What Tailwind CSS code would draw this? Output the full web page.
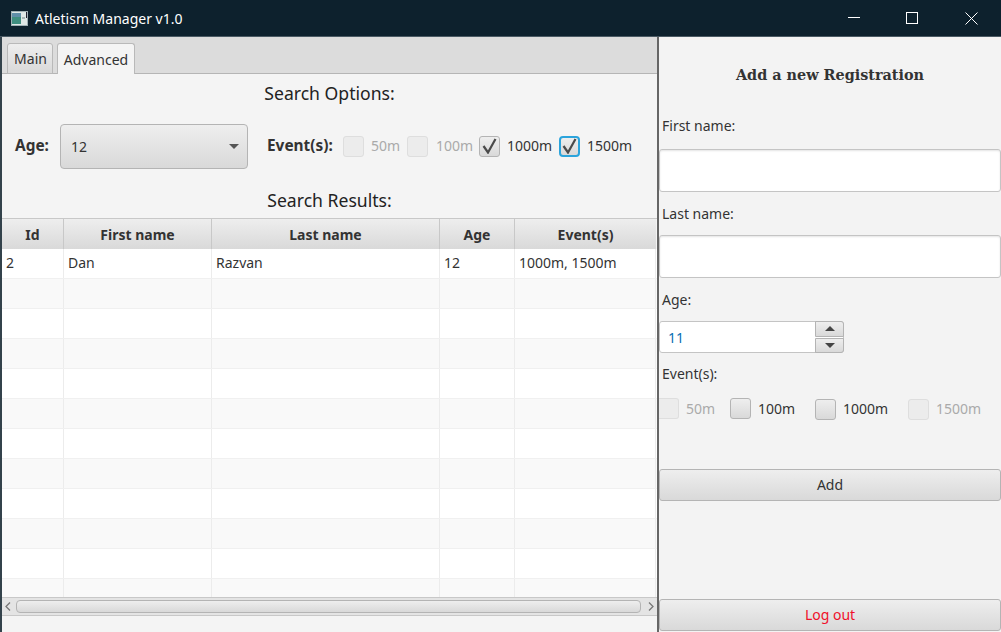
<!DOCTYPE html>
<html lang="en">
<head>
    <meta charset="UTF-8">
    <title>Atletism Manager v1.0</title>
    <script src="https://cdn.jsdelivr.net/npm/@tailwindcss/browser@4"></script>
</head>
<body class="w-[1001px] h-[632px] overflow-hidden bg-[#f4f4f4] text-[#333] font-['Noto_Sans',sans-serif] text-[14px]">
    <!-- Title bar -->
    <div class="h-[37px] bg-[#0d212d] flex items-center border-b border-[#4a5a64] text-white">
        <svg class="ml-[11px] mr-[7px]" width="17" height="15" viewBox="0 0 17 15">
            <rect x="0.5" y="0.5" width="16" height="14" fill="#dfe8e6" stroke="#9fb0b4"/>
            <rect x="1" y="2" width="9" height="11" fill="#3f8f80"/>
            <rect x="1" y="2" width="9" height="4" fill="#5f8fa8"/>
            <rect x="11" y="6" width="3" height="2" fill="#a8b8b8"/>
            <rect x="15" y="1" width="1" height="6" fill="#223"/>
        </svg>
        <span>Atletism Manager v1.0</span>
        <div class="ml-auto flex">
            <div class="w-[54px] h-[36px] flex items-center justify-center">
                <svg width="12" height="12" viewBox="0 0 12 12"><path d="M0 5.5H12" stroke="#fff"/></svg>
            </div>
            <div class="w-[61px] h-[36px] flex items-center justify-center">
                <svg width="12" height="12" viewBox="0 0 12 12"><rect x="0.5" y="0.5" width="11" height="11" fill="none" stroke="#fff"/></svg>
            </div>
            <div class="w-[59px] h-[36px] flex items-center justify-center">
                <svg width="13" height="13" viewBox="0 0 13 13"><path d="M0.5 0.5L12.5 12.5M12.5 0.5L0.5 12.5" stroke="#fff"/></svg>
            </div>
        </div>
    </div>

    <div class="flex h-[595px]">
        <!-- Left pane -->
        <div class="w-[657px] border-l-2 border-[#33424b] flex flex-col">
            <div class="h-[37px] shrink-0 bg-[#dcdcdc] border-b border-[#b5b5b5] flex items-end pl-[5px] gap-[4px]">
                <div class="w-[46px] h-[31px] -mb-px border border-[#b9b9b9] rounded-t-[3px] bg-linear-to-b from-[#eeeeee] to-[#d9d9d9] flex items-center justify-center pl-px">Main</div>
                <div class="w-[78px] h-[31px] -mb-px border border-[#b9b9b9] border-b-0 rounded-t-[3px] bg-[#f4f4f4] flex items-center justify-center">Advanced</div>
            </div>
            <div class="h-[37px] shrink-0 pt-[2px] flex items-center justify-center text-[17.6px] text-[#222]">Search Options:</div>
            <div class="h-[50px] shrink-0 mt-[10px] flex items-center pl-[13px]">
                <span class="font-bold text-[15.4px] w-[45px] pb-px">Age:</span>
                <div class="w-[188px] h-[45px] border border-[#b4b4b4] rounded-[4px] bg-linear-to-b from-[#eeeeee] to-[#d9d9d9] flex items-center pl-[10px] pr-[8px]">
                    <span>12</span>
                    <svg class="ml-auto" width="10" height="5" viewBox="0 0 10 5"><path d="M0 0H10L5 5Z" fill="#555"/></svg>
                </div>
                <span class="font-bold text-[15.4px] ml-[19px] w-[76px] pb-px">Event(s):</span>
                <div class="w-[21px] h-[21px] border border-[#dedede] rounded-[3px] bg-[#ececec]"></div>
                <span class="ml-[7px] w-[36px] pb-px text-[#aaa]">50m</span>
                <div class="w-[21px] h-[21px] border border-[#dedede] rounded-[3px] bg-[#ececec]"></div>
                <span class="ml-[8px] w-[43px] pb-px text-[#aaa]">100m</span>
                <div class="w-[21px] h-[21px] border border-[#b4b4b4] rounded-[3px] bg-linear-to-b from-[#eeeeee] to-[#d9d9d9] flex items-center justify-center">
                    <svg width="15" height="16" viewBox="0 0 15 16"><path d="M1.5 8L6 14.5L13.5 1" fill="none" stroke="#4a4a4a" stroke-width="2.2"/></svg>
                </div>
                <span class="ml-[7px] w-[52px] pb-px">1000m</span>
                <div class="w-[21px] h-[21px] border-2 border-[#2ba4dc] rounded-[4px] bg-linear-to-b from-[#eeeeee] to-[#d9d9d9] flex items-center justify-center">
                    <svg width="15" height="16" viewBox="0 0 15 16"><path d="M1.5 8L6 14.5L13.5 1" fill="none" stroke="#4a4a4a" stroke-width="2.2"/></svg>
                </div>
                <span class="ml-[7px] pb-px">1500m</span>
            </div>
            <div class="h-[47px] shrink-0 pt-[12px] flex items-center justify-center text-[17.6px] text-[#222]">Search Results:</div>

            <!-- Table -->
            <div class="h-[379px] shrink-0 overflow-hidden border-t border-[#c8c8c8]">
                <div class="grid grid-cols-[62px_148px_228px_75px_141px] h-[30px] font-bold bg-linear-to-b from-[#eeeeee] to-[#d9d9d9] w-[654px]">
                    <div class="border-r border-[#c8c8c8] flex items-center justify-center">Id</div>
                    <div class="border-r border-[#c8c8c8] flex items-center justify-center">First name</div>
                    <div class="border-r border-[#c8c8c8] flex items-center justify-center">Last name</div>
                    <div class="border-r border-[#c8c8c8] flex items-center justify-center">Age</div>
                    <div class="flex items-center justify-center">Event(s)</div>
                </div>
                <div id="rows"></div>
            </div>

            <!-- Horizontal scrollbar -->
            <div class="h-[19px] shrink-0 border-y border-[#c8c8c8] bg-[#e4e4e4] flex items-center pl-[3px]">
                <svg width="6" height="9" viewBox="0 0 6 9"><path d="M5 0.5L1 4.5L5 8.5" fill="none" stroke="#777" stroke-width="1.3"/></svg>
                <div class="ml-[5px] w-[625px] h-[13px] border border-[#b4b4b4] rounded-[4px] bg-linear-to-b from-[#eeeeee] to-[#d9d9d9]"></div>
                <svg class="ml-[7px]" width="6" height="9" viewBox="0 0 6 9"><path d="M1 0.5L5 4.5L1 8.5" fill="none" stroke="#777" stroke-width="1.3"/></svg>
            </div>
        </div>

        <!-- Divider -->
        <div class="w-[2px] bg-[#666]"></div>

        <!-- Right pane -->
        <div class="w-[342px] bg-[#f3f3f3] flex flex-col">
            <div class="h-[76px] flex items-center justify-center font-['DejaVu_Serif',serif] font-bold text-[14.4px] text-[#333]">Add a new Registration</div>
            <div class="h-[36px] pl-[3px] pb-[12px] flex items-center">First name:</div>
            <div class="h-[43px] bg-white border border-[#c4c4c4] rounded-[3px] shadow-[inset_0_1px_2px_#e4e4e4]"></div>
            <div class="h-[43px] pl-[3px] flex items-center">Last name:</div>
            <div class="h-[43px] bg-white border border-[#c4c4c4] rounded-[3px] shadow-[inset_0_1px_2px_#e4e4e4]"></div>
            <div class="h-[43px] pl-[3px] flex items-center">Age:</div>
            <div class="w-[185px] h-[32px] flex border border-[#c4c4c4] rounded-[3px] bg-white">
                <div class="flex-1 pl-[8px] flex items-center text-[#0a6fb5]">11</div>
                <div class="w-[29px] -my-px -mr-px flex flex-col gap-px">
                    <div class="flex-1 border border-[#b4b4b4] rounded-tr-[3px] bg-linear-to-b from-[#eeeeee] to-[#d9d9d9] flex items-center justify-center">
                        <svg width="10" height="5" viewBox="0 0 10 5"><path d="M0 5H10L5 0Z" fill="#444"/></svg>
                    </div>
                    <div class="flex-1 border border-[#b4b4b4] rounded-br-[3px] bg-linear-to-b from-[#eeeeee] to-[#d9d9d9] flex items-center justify-center">
                        <svg width="10" height="5" viewBox="0 0 10 5"><path d="M0 0H10L5 5Z" fill="#444"/></svg>
                    </div>
                </div>
            </div>
            <div class="h-[42px] pl-[3px] pb-[2px] flex items-center">Event(s):</div>
            <div class="h-[21px] mt-[3px] flex items-center">
                <div class="w-[20px] h-[21px] border border-l-0 border-[#dedede] rounded-r-[3px] bg-[#ececec]"></div>
                <span class="ml-[7px] w-[44px] text-[#aaa]">50m</span>
                <div class="w-[21px] h-[21px] border border-[#b4b4b4] rounded-[3px] bg-linear-to-b from-[#eeeeee] to-[#d9d9d9]"></div>
                <span class="ml-[7px] w-[57px]">100m</span>
                <div class="w-[21px] h-[21px] mt-[2px] border border-[#b4b4b4] rounded-[3px] bg-linear-to-b from-[#eeeeee] to-[#d9d9d9]"></div>
                <span class="ml-[7px] w-[65px]">1000m</span>
                <div class="w-[21px] h-[21px] mt-[2px] border border-[#dedede] rounded-[3px] bg-[#ececec]"></div>
                <span class="ml-[7px] text-[#aaa]">1500m</span>
            </div>
            <div class="h-[32px] mt-[50px] pb-[2px] border border-[#b4b4b4] rounded-[3px] bg-linear-to-b from-[#eeeeee] to-[#d9d9d9] flex items-center justify-center">Add</div>
            <div class="h-[32px] mt-[98px] pb-[2px] border border-[#b4b4b4] rounded-[3px] bg-linear-to-b from-[#eeeeee] to-[#d9d9d9] flex items-center justify-center text-[#f0102a]">Log out</div>
        </div>
    </div>

    <script>
        // Only the first row has data, the rest are empty striped rows
        const data = [['2', 'Dan', 'Razvan', '12', '1000m, 1500m']];
        const rows = document.getElementById('rows');
        for (let i = 0; i < 12; i++) {
            const row = document.createElement('div');
            row.className = 'grid grid-cols-[62px_148px_228px_75px_141px] h-[30px] border-b border-[#f0f0f0] ' + (i % 2 ? 'bg-[#f9f9f9]' : 'bg-white');
            const cells = data[i] || ['', '', '', '', ''];
            row.innerHTML = cells.map(c => `<div class="border-r border-[#ececec] flex items-center pl-[4px] pb-[2px]">${c}</div>`).join('');
            rows.appendChild(row);
        }
    </script>
</body>
</html>
